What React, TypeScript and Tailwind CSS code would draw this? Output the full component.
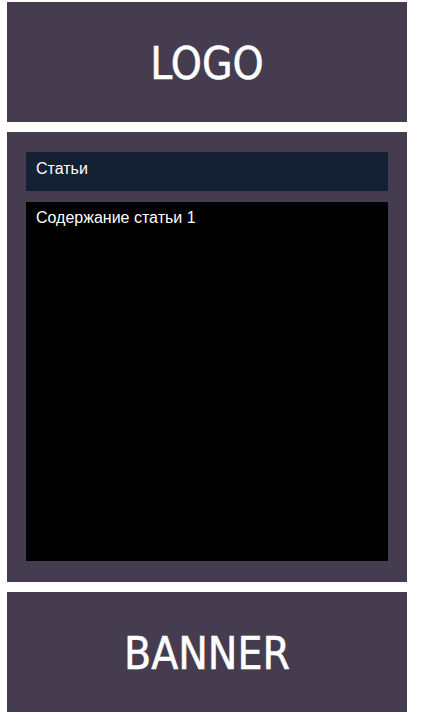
export default function App() {
  return (
    <div className="min-h-[725px] bg-white pt-[2px] pl-[7px] font-['Liberation_Sans',Arial,sans-serif]">
      <div className="flex w-[400px] flex-col gap-[10px]">
        <header className="flex h-[120px] items-center justify-center bg-[#453c4f] pt-[3px]">
          <span className="font-['DejaVu_Sans',sans-serif] text-[44px] leading-none text-white [font-stretch:condensed] [-webkit-text-stroke:0.5px_white]">
            LOGO
          </span>
        </header>

        <main className="flex h-[450px] flex-col gap-[11px] bg-[#453c4f] px-[19px] pt-[20px] pb-[21px]">
          <div className="h-[39px] bg-[#142033] px-[10px] pt-[7px] text-[16px] leading-[19px] text-white">
            Статьи
          </div>
          <div className="flex-1 bg-black px-[10px] pt-[6px] text-[16px] leading-[19px] text-white">
            Содержание статьи 1
          </div>
        </main>

        <footer className="flex h-[120px] items-center justify-center bg-[#453c4f] pt-[3px]">
          <span className="font-['DejaVu_Sans',sans-serif] text-[44px] leading-none text-white [font-stretch:condensed] [-webkit-text-stroke:0.5px_white]">
            BANNER
          </span>
        </footer>
      </div>
    </div>
  );
}
